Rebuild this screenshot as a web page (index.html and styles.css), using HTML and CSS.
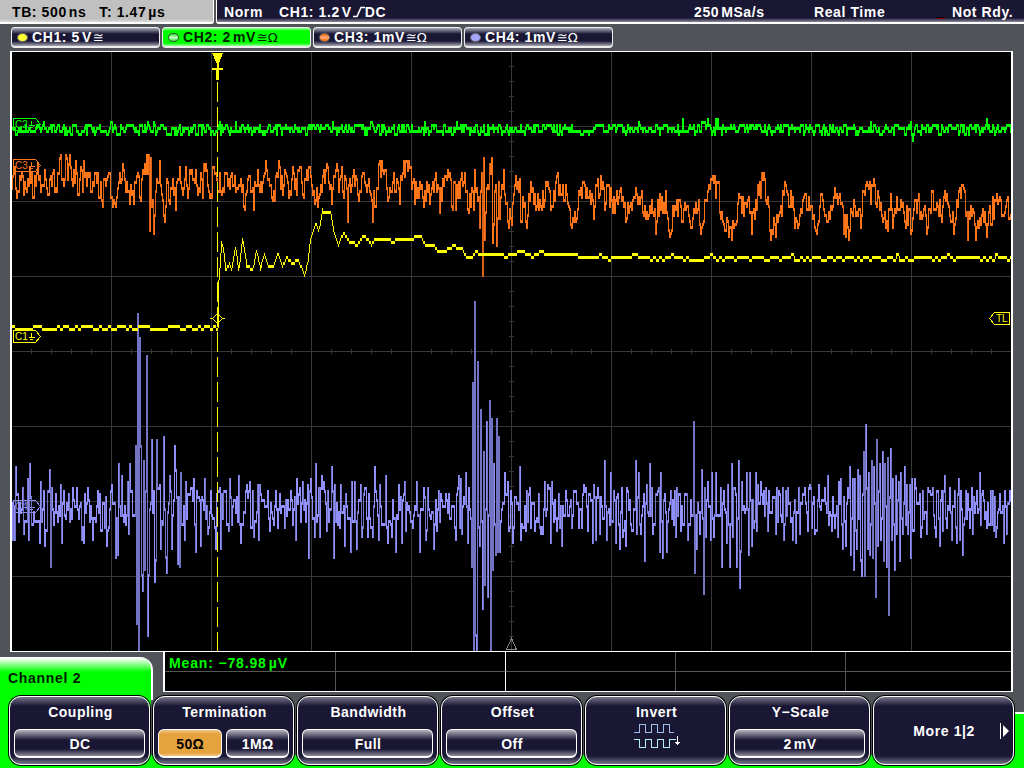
FILE: index.html
```html
<!DOCTYPE html>
<html lang="en">
<head>
  <meta charset="UTF-8">
  <title>Oscilloscope</title>
  <link rel="stylesheet" href="styles.css">
</head>
<body>
  <!-- Status bar -->
  <header class="status">
    <div class="timebase"><span>TB: 500<i></i>ns</span><span>T: 1.47<i></i>µs</span></div>
    <div class="acquire">
      <span>Norm</span>
      <span class="trig">CH1: 1.2<i></i>V<svg width="14" height="12" viewBox="0 0 14 12"><path d="M1 10.5H5L9 1.5H13" fill="none" stroke="#fff" stroke-width="1.6"/></svg>DC</span>
      <span>250<i></i>MSa/s</span>
      <span>Real Time</span>
      <span class="cursor"></span>
      <span>Not Rdy.</span>
    </div>
  </header>

  <!-- Channel tabs -->
  <nav class="channels">
    <div class="channel"><b class="led yellow"></b><span>CH1: 5<i></i>V</span><em>≅</em></div>
    <div class="channel active"><b class="led green"></b><span>CH2: 2<i></i>mV</span><em>≅Ω</em></div>
    <div class="channel"><b class="led orange"></b><span>CH3: 1mV</span><em>≅Ω</em></div>
    <div class="channel"><b class="led blue"></b><span>CH4: 1mV</span><em>≅Ω</em></div>
  </nav>

  <!-- Graticule, viewBox is in screen pixels -->
  <main class="screen">
    <svg class="plot" width="999" height="599" viewBox="12 52 999 599">
      <path id="grid" class="grid"/>
      <path class="ref-mark" d="M511.5 638.5L506.5 649.5H516.5Z"/>
      <g class="tag c4"><path d="M13.5 500.5H35.5L40.5 506.5L35.5 512.5H13.5Z"/><path d="M31.5 502V507M29 507.5H35M30 509.5H33"/><text x="15" y="510">C4</text></g>
      <path id="ch4" class="trace c4"/>
      <path id="ch4fast" class="trace c4-dim"/>
      <g class="tag c3"><path d="M13.5 159.5H35.5L40.5 165.5L35.5 171.5H13.5Z"/><path d="M31.5 162V166M29 166.5H35M30 168.5H33"/><text x="15" y="169">C3</text></g>
      <path id="ch3" class="trace c3"/>
      <path id="ch3fast" class="trace c3-dim"/>
      <g class="tag c2"><path d="M13.5 118.5H35.5L40.5 124.5L35.5 130.5H13.5Z"/><path d="M31.5 121V125M29 125.5H35M30 127.5H33"/><text x="15" y="128">C2</text></g>
      <path id="ch2" class="trace c2"/>
      <path id="ch1" class="trace c1"/>
      <g class="tag c1"><path d="M13.5 330.5H35.5L40.5 336.5L35.5 342.5H13.5Z"/><path d="M31.5 333V337M29 337.5H35M30 339.5H33"/><text x="15" y="340">C1</text></g>
      <!-- trigger position and level -->
      <path class="trig-line" d="M217.5 82V651"/>
      <path class="trig-flag" d="M212 53H223L218.500 64V68H223V70H219V80H216V70H212V68H217V64Z"/>
      <path class="trig-level" d="M210 318.500H212.500L217.500 313.500L222.500 318.500L217.500 323.500L212.500 318.500M222.500 318.500H225"/>
      <g class="tag c1"><path d="M1009.500 312.500H994.500L989.500 318.500L994.500 324.500H1009.500Z"/><text class="tl" x="996" y="322">TL</text></g>
    </svg>
  </main>

  <section class="info">
    <div class="menu-title">Channel 2</div>
    <div class="measure">
      <div class="cell">Mean: −78.98<i></i>µV</div><div class="cell mid"></div><div class="cell"></div><div class="cell"></div><div class="cell last"></div>
      <div class="cell low"></div><div class="cell low mid"></div><div class="cell low"></div><div class="cell low"></div><div class="cell low last"></div>
    </div>
  </section>

  <!-- Soft keys -->
  <footer class="softkeys">
    <div class="key"><h2>Coupling</h2><div class="values"><span>DC</span></div></div>
    <div class="key"><h2>Termination</h2><div class="values"><span class="selected">50Ω</span><span>1MΩ</span></div></div>
    <div class="key"><h2>Bandwidth</h2><div class="values"><span>Full</span></div></div>
    <div class="key"><h2>Offset</h2><div class="values"><span>Off</span></div></div>
    <div class="key"><h2>Invert</h2>
      <svg class="invert" width="50" height="26" viewBox="632 723 50 26" fill="none">
        <path stroke="#a3bdea" d="M634 732.500H639.500V724.500H645.500V732.500H651.500V724.500H657.500V732.500H663.500V724.500H669.500V732.500H674"/>
        <path stroke="#b5eef5" d="M634 739.500H639.500V747.500H645.500V739.500H651.500V747.500H657.500V739.500H663.500V747.500H669.500V739.500H676"/>
        <path stroke="#fff" d="M677.500 736V745M675 742.500H680M676 743.500H679"/>
      </svg>
    </div>
    <div class="key"><h2>Y−Scale</h2><div class="values"><span>2<i></i>mV</span></div></div>
    <div class="key more"><span>More 1|2</span>
      <svg width="10" height="16" viewBox="0 0 10 16"><path d="M0 0H1V16H0ZM3 2L9 8L3 14Z" fill="#fff"/></svg>
    </div>
  </footer>

  <script src="script.js"></script>
</body>
</html>
```
FILE: styles.css
```css
* {
  box-sizing: border-box;
}

body {
  margin: 0;
  width: 1024px;
  height: 768px;
  overflow: hidden;
  display: flex;
  flex-direction: column;
  background: #505459;
  color: #fff;
  font: bold 14px "Liberation Sans", Arial, sans-serif;
  letter-spacing: 0.6px;
  white-space: nowrap;
}

/* narrow gap between a number and its unit */
i {
  display: inline-block;
  width: 2px;
}

/* Status bar */
.status {
  display: flex;
  height: 24px;
  gap: 2px;
  line-height: 24px;
}

.timebase {
  width: 214px;
  padding-left: 12px;
  display: flex;
  gap: 13px;
  color: #000;
  background: linear-gradient(#c0c0c0 19px, #dcdcdc 22px, #fff 22px);
  border-right: 1px solid #fff;
  border-bottom-right-radius: 3px;
}

.acquire {
  flex: 1;
  display: grid;
  grid-template-columns: 55px 415px 120px 123px 15px auto;
  padding-left: 7px;
  background: linear-gradient(#1a1735 18px, #8d8b9a 22px, #fff 22px);
  border-left: 1px solid #fff;
  border-bottom-left-radius: 3px;
}

.trig svg {
  margin-right: -1px;
  vertical-align: -1px;
}

.cursor {
  width: 8px;
  height: 2px;
  margin-top: 17px;
  background: #900;
  border-top: 1px solid #000;
}

/* Channel tabs */
.channels {
  display: flex;
  gap: 2px;
  padding: 3px 0 3px 11px;
  height: 27px;
}

.channel {
  width: 149px;
  height: 21px;
  display: flex;
  align-items: center;
  padding-left: 5px;
  border: 1px solid #eee;
  border-bottom-width: 2px;
  border-radius: 4px;
  background: linear-gradient(#aaa9b5, #1a1735 6px, #1a1735 13px, #aaa9b5);
}

.channel.active {
  color: #002000;
  background: linear-gradient(#9f9, #0f0 3px, #0f0 15px, #9f9);
}

.channel em {
  font: 13px "DejaVu Sans", sans-serif;
  letter-spacing: 0;
  margin-left: 1px;
}

.led {
  width: 11px;
  height: 9px;
  margin-right: 4px;
  border-radius: 50%;
  border: 1px solid #666;
}

.led.yellow { background: #ff3; }
.led.green { background: linear-gradient(#4d4, #bfb, #4d4); border-color: #385038; }
.led.orange { background: linear-gradient(#f60, #fa7, #f60); }
.led.blue { background: #a5a5ff; }

/* Graticule */
.screen {
  width: 1003px;
  height: 601px;
  margin-left: 10px;
  background: #000;
  border: solid #fff;
  border-width: 1px 2px;
  flex: none;
}

.plot {
  display: block;
  shape-rendering: crispEdges;
}

.plot path {
  fill: none;
}

.grid { stroke: #373737; }
.plot .ref-mark { stroke: #888; }
.trace.c1, .tag.c1 path { stroke: #ff0; }
.trace.c2, .tag.c2 path { stroke: #0f0; }
.trace.c3, .tag.c3 path { stroke: #ff7518; }
.trace.c4, .tag.c4 path { stroke: #9090ff; }
.c3-dim { stroke: #d96218; }
.c4-dim { stroke: #7373c4; }

.tag text {
  font: 10px "Liberation Sans", Arial, sans-serif;
  letter-spacing: 0;
}

.tag.c1 text { fill: #ff0; }
.tag.c2 text { fill: #0f0; }
.tag.c3 text { fill: #ff7518; }
.tag.c4 text { fill: #9090ff; }

.plot .trig-line {
  stroke: #ff0;
  stroke-dasharray: 20 5;
}

.plot .trig-flag { fill: #ff0; }
.plot .trig-level { stroke: #ff0; }

/* Menu title and measurement table */
.info {
  display: flex;
  height: 42px;
  justify-content: space-between;
  align-items: flex-start;
}

.menu-title {
  width: 153px;
  height: 43px;
  margin-top: 5px;
  padding: 14px 0 0 8px;
  line-height: 14px;
  letter-spacing: 0.7px;
  color: #001c00;
  background: linear-gradient(#fff 1px, #0f0 15px);
  border-right: 2px solid #fff;
  border-top-right-radius: 13px;
}

.measure {
  width: 850px;
  height: 40px;
  margin-right: 11px;
  display: grid;
  grid-template-columns: 171px 170px 170px 170px 165px;
  grid-template-rows: 20px 19px;
  background: #000;
  color: #0f0;
  border: solid #fff;
  border-width: 0 2px 1px;
}

.cell {
  padding-left: 4px;
  line-height: 22px;
  letter-spacing: 0.85px;
  border-right: 1px solid #555;
  border-bottom: 1px solid #555;
}

.cell.mid { border-right-color: #fff; }
.cell.low { border-bottom: 0; }
.cell.last { border-right: 0; }

/* Soft keys */
.softkeys {
  flex: 1;
  display: flex;
  gap: 3px;
  padding: 2px 9px;
  background:
    linear-gradient(#0f0, #0f0) 0 0 / 151px 100% no-repeat,
    linear-gradient(#fff 2px, #0f0 2px) 1015px 18px / 9px 60px no-repeat,
    linear-gradient(#0f0, #0f0) 0 61px / 100% 13px no-repeat;
}

.key {
  width: 141px;
  height: 69px;
  flex: none;
  border: 1px solid #fff;
  border-radius: 12px;
  box-shadow: 0 0 0 1px #000;
  padding: 0 4px;
  background: linear-gradient(#77758a, #1a1735 9px, #1a1735 59px, #77758a);
  text-align: center;
}

.key h2 {
  margin: 0;
  padding-left: 2px;
  font-size: 14px;
  letter-spacing: 0.5px;
  line-height: 30px;
  height: 32px;
}

.values {
  display: flex;
  gap: 4px;
}

.values span {
  flex: 1;
  height: 29px;
  line-height: 28px;
  padding-left: 1px;
  letter-spacing: 0.4px;
  border: 1px solid #fff;
  border-bottom-width: 2px;
  border-radius: 6px;
  background: linear-gradient(#b5b4bf, #1a1735 10px, #1a1735 19px, #8d8b9c);
}

.values .selected {
  color: #000;
  background: linear-gradient(#f0c58a, #e6a33d 4px, #e6a33d 23px, #f0c58a);
}

.invert {
  display: block;
  margin: -6px 0 0 42px;
  shape-rendering: crispEdges;
}

.more {
  display: flex;
  align-items: center;
  justify-content: flex-end;
  gap: 25px;
  padding-right: 3px;
}
```
FILE: script.js
```js
// pseudo random, fixed seed so the traces are stable
let seed = 4711;
function rnd() {
  seed = (seed * 16807) % 2147483647;
  return seed / 2147483647;
}

// "x,y x,y ..." -> [[x, y], ...]
function parse(text) {
  return text.trim().split(/\s+/).map(p => p.split(',').map(Number));
}

// graticule
let grid = '';
for (let x = 111; x < 1000; x += 100) grid += `M${x}.5 52V651`;
for (let y = 126; y < 600; y += 75) grid += `M12 ${y}.5H1011`;
for (let x = 31; x < 1011; x += 20) grid += `M${x}.5 349V354`;
for (let y = 66; y < 651; y += 15) grid += `M509 ${y}.5H514`;
document.getElementById('grid').setAttribute('d', grid);

// samples sit on 3px levels, one vertical span per column
function draw(id, v, fast) {
  let d = '', dim = '';
  const level = y => 1 + 3 * Math.floor((y - 1) / 3);
  for (let x = 12; x <= 1010; x++) {
    const b = level(v[x]);
    let a = level(v[x - 1] === undefined ? v[x] : v[x - 1]);
    // the slow CH1 trace steps without overlap
    if (id === 'ch1' && a !== b) a += a < b ? 3 : -3;
    const span = `M${x}.5 ${Math.min(a, b)}V${Math.max(a, b) + 3}`;
    if (fast && Math.abs(a - b) > fast && (Math.abs(a - b) > 90 || x % 2)) dim += span;
    else d += span;
  }
  document.getElementById(id).setAttribute('d', d);
  if (fast) document.getElementById(id + 'fast').setAttribute('d', dim);
}

// straight lines between points
function line(points) {
  const v = [];
  for (let i = 1; i < points.length; i++) {
    const [x0, y0] = points[i - 1], [x1, y1] = points[i];
    for (let x = x0; x <= x1; x++) v[x] = x1 === x0 ? y1 : y0 + (y1 - y0) * (x - x0) / (x1 - x0);
  }
  return v;
}

// CH1
const ch1 = line(parse(`12,329 217,329 218,280 219,270 221,241 223,252 225,270 229,264 231,270 235,247 238,270
242,238 246,265 252,270 256,250 260,268 264,253 268,265 273,267 278,253 282,267 286,258 292,263 298,260 302,270 304,276
307,262 310,238 315,223 318,231 320,222 322,209 323,212 330,212 333,230 338,245 343,233 349,242 357,245 363,236 368,240
371,245 374,239 388,239 392,242 397,240 412,239 415,236 421,237 425,245 433,245 438,252 444,252 448,248 455,246 458,249
462,249 466,257 472,257 475,252 480,254 500,254 505,257 511,254 521,252 528,254 532,257 540,252 548,254 575,254 579,257 1011,257`));
for (let x = 12; x < 217; x += 3) {
  const up = rnd() < 0.5 ? 326 : 329;
  for (let i = 0; i < 3 && x + i < 217; i++) ch1[x + i] = up;
}
for (let x = 590; x < 1008; x += 3) {
  const r = rnd();
  if (r < 0.35) ch1[x] = ch1[x + 1] = ch1[x + 2] = r < 0.28 ? 260 : 254;
}
draw('ch1', ch1);

// CH2
const ch2 = [];
let hold = 129;
for (let x = 12; x <= 1011; x++) {
  const r = rnd();
  if (r < 0.09) hold = 134;
  else if (r < 0.3) hold = 132;
  else if (r < 0.55) hold = 129;
  else if (r < 0.76) hold = 126;
  else if (r < 0.77) hold = 123;
  ch2[x] = hold;
}
[[147, 121], [153, 121], [332, 122], [682, 118], [707, 118], [715, 118], [717, 118], [912, 139], [986, 118]].forEach(p => ch2[p[0]] = p[1]);
draw('ch2', ch2);

// CH3
const ch3points = parse(`12,187 14,172 18,190 22,174 27,190 30,166 34,196 38,164 43,185 45,170 49,193 53,172 57,190 61,154
63,180 66,154 68,178 70,154 72,180 76,160 78,193 81,168 84,160 83,192 88,174 91,192 95,174 103,205 105,178 110,173 112,198
116,205 119,182 123,163 126,190 134,202 137,176 140,196 145,163 147,154 149,154 150,229 151,157 152,205 154,232 157,180 160,160
162,195 165,220 167,178 170,204 173,178 176,208 178,180 180,166 183,195 186,166 188,196 192,170 196,169 198,193 201,172 204,163
203,197 206,165 209,190 212,197 213,166 217,180 219,192 220,173 224,192 227,172 234,184 241,180 245,208 248,178 250,176 254,208
258,169 262,190 266,160 270,184 275,199 277,172 280,166 283,193 285,169 290,190 293,166 297,193 299,169 304,197 306,178 310,166
313,194 318,205 321,186 327,163 332,202 335,175 338,169 339,190 342,166 343,192 346,180 348,220 350,180 353,175 358,195 364,172 368,186
373,222 374,192 376,207 380,160 386,170 388,200 391,190 394,173 400,202 403,172 407,160 409,160 415,202 420,181 424,207 428,192
430,204 435,178 440,213 444,186 449,175 453,210 455,181 456,210 462,172 466,190 469,213 473,190 474,210 475,169 478,200 480,228
481,190 482,172 483,276 484,157 485,238 487,187 490,163 492,157 493,243 494,223 496,185 497,246 499,182 500,217 504,169 508,222
512,225 516,175 520,178 521,220 524,205 527,226 529,193 533,187 539,210 547,184 553,205 557,175 563,184 568,202 572,226 576,220
580,195 584,181 594,217 597,184 603,181 606,203 609,184 613,211 620,190 627,217 633,200 641,197 644,214 650,205 656,232 660,193
663,212 666,190 670,235 677,200 683,222 687,205 692,226 699,199 701,232 707,200 713,175 715,175 719,181 721,219 726,229 732,238
740,196 744,215 748,199 752,232 758,184 762,172 764,172 771,238 776,235 786,184 791,190 795,226 799,225 803,200 809,196 817,232
821,193 828,220 835,187 840,193 844,232 849,238 853,215 861,226 863,190 869,187 875,184 883,220 888,229 891,193 893,226 897,196
905,220 912,229 916,199 923,215 927,232 933,190 942,220 945,190 954,232 957,200 964,187 968,238 972,215 976,238 980,217 987,235
995,200 1000,196 1003,215 1007,200 1012,220`).sort((a, b) => a[0] - b[0]);
const ch3 = line(ch3points);
for (let x = 12; x < 1011; x++) {
  const mean = x < 480 ? 184 : x < 640 ? 198 : 208;
  // pull long ramps back to the mean, then add noise
  ch3[x] += (mean - ch3[x]) * 0.3 + (rnd() - 0.5) * 25;
}
ch3points.forEach(p => ch3[p[0]] = p[1]);
ch3.shift();
draw('ch3', ch3, 21);

// CH4, noise floor plus bursts
const ch4 = [];
for (let x = 11; x <= 1012; x++) ch4[x] = rnd() < 0.25 && x > 11 ? ch4[x - 1] : 510 + (rnd() - 0.5) * 42;
parse(`13,538 16,466 15,538 24,532 28,478 29,538 30,463 40,541 41,481 45,544 50,469 51,565 52,487 61,484 62,541 64,490
73,488 82,538 85,493 84,541 88,487 93,538 107,544 112,484 116,556 118,553 119,463 122,475 128,481 129,532 130,463 136,445
137,622 138,313 139,651 140,337 141,445 142,574 143,589 144,460 145,568 147,355 148,634 149,574 152,439 155,580 156,559
157,439 160,484 161,547 164,436 166,556 167,571 170,475 172,547 175,445 176,469 178,562 180,565 181,472 185,538 186,481
194,478 196,550 197,490 201,544 205,478 208,532 211,490 216,547 220,487 221,547 229,531 230,478 239,475 241,541 247,484 250,481
254,535 258,484 259,538 260,484 268,490 296,538 297,478 300,487 303,481 308,484 309,556 311,478 315,535 316,463 319,487 320,535
322,475 324,481 327,529 328,490 332,466 334,556 335,484 341,484 345,544 351,550 352,481 355,481 357,547 361,484 362,535 364,493
368,535 369,493 373,535 375,466 379,538 380,484 386,475 388,541 392,535 396,550 399,484 402,541 405,481 417,481 420,550 424,487
426,538 428,487 434,547 439,490 456,538 459,475 461,478 462,532 466,472 468,541 469,487 472,565 473,382 474,651 475,301 476,634
477,651 478,361 480,544 481,409 483,607 484,451 485,583 487,421 488,595 490,400 491,651 492,418 493,568 494,463 496,553 497,418
498,550 499,436 500,550 505,472 508,481 511,490 513,541 520,466 521,538 526,529 527,490 530,487 535,529 541,532 543,532 545,481
548,484 551,541 552,481 557,529 562,544 566,490 572,526 584,484 588,529 593,541 594,484 596,538 598,487 600,532 605,460 607,538
611,472 616,541 617,496 620,547 622,487 623,535 626,544 628,490 633,529 636,460 637,532 639,472 641,532 644,493 645,559 647,484
650,463 653,532 660,550 661,472 663,556 665,493 667,550 676,535 677,487 688,538 694,421 695,571 697,547 700,532 702,469 704,592
705,487 706,535 708,481 711,538 712,472 714,535 716,472 721,487 722,565 724,490 727,541 728,484 730,565 732,463 733,535 737,565
739,460 740,586 741,550 742,481 747,472 749,553 750,472 752,544 756,472 757,529 758,484 761,481 766,487 768,529 769,490 776,532
777,487 784,538 788,487 793,538 796,541 800,532 803,493 805,487 808,529 810,484 815,532 819,484 825,487 828,475 832,529 833,496
838,535 839,481 841,478 843,547 846,544 848,487 850,466 851,553 853,478 854,568 855,478 857,547 858,469 860,475 861,559 862,574
864,451 865,574 866,424 868,547 869,472 870,553 872,460 873,556 874,466 876,595 877,439 878,544 880,463 881,538 883,451 884,559
885,463 887,565 888,457 889,613 891,448 892,538 893,478 895,568 896,475 897,532 899,481 900,559 901,472 903,532 905,466 907,484
908,532 910,484 911,556 912,478 915,478 921,535 927,532 928,487 933,487 936,535 940,544 942,490 943,529 945,475 950,487 952,538
955,490 957,541 959,478 960,538 961,490 963,553 966,490 972,487 973,532 977,490 980,472 983,490 987,526 993,490 994,529 996,535
1000,493 1004,541 1005,490 1007,532 1010,490`).forEach(p => ch4[p[0]] = p[1]);
ch4.shift();
draw('ch4', ch4, 24);
```
